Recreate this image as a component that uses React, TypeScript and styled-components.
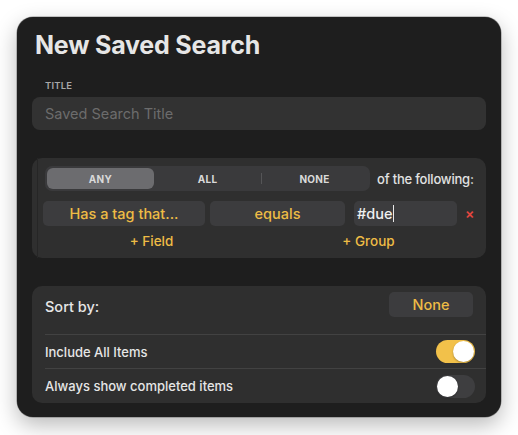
import React from "react";
import styled, { createGlobalStyle } from "styled-components";

const Global = createGlobalStyle`
  html, body { margin: 0; padding: 0; background: #ffffff; }
  body { font-family: Inter, "Noto Sans", "Liberation Sans", sans-serif; -webkit-font-smoothing: antialiased; }
  * { box-sizing: border-box; }
`;

const Page = styled.div`
  width: 518px;
  height: 435px;
  padding: 17px 0 0 17px;
`;

const Window = styled.div`
  width: 484px;
  height: 400px;
  background: #1e1e1e;
  border-radius: 16px;
  padding: 12px 15px 14px 15px;
  box-shadow: 0 8px 22px rgba(0, 0, 0, 0.28), 0 0 0 0.5px rgba(0, 0, 0, 0.4);
  display: flex;
  flex-direction: column;
`;

const Heading = styled.h1`
  margin: 0;
  padding-left: 3px;
  font-size: 25px;
  line-height: 32px;
  font-weight: 700;
  color: #e6e6e6;
  letter-spacing: -0.2px;
`;

const Label = styled.div`
  margin: 19px 0 0 13px;
  font-size: 9.5px;
  line-height: 12px;
  font-weight: 600;
  color: #a8a8a8;
  letter-spacing: 0.2px;
`;

const TextInput = styled.div`
  margin-top: 5px;
  height: 33px;
  border-radius: 8px;
  background: #323232;
  display: flex;
  align-items: center;
  padding-left: 13px;
  font-size: 14.5px;
  color: #6c6c6c;
`;

const Card = styled.div<{ $mt: number }>`
  margin-top: ${(p) => p.$mt}px;
  background: #2f2f2f;
  border-radius: 10px;
`;

const GroupCard = styled(Card)`
  height: 100px;
  padding-left: 5px;
  display: flex;
`;

const GroupInner = styled.div`
  flex: 1;
  border-left: 1.5px solid #262626;
  padding: 8px 6px 0 5px;
  display: flex;
  flex-direction: column;
`;

const SegRow = styled.div`
  display: flex;
  align-items: center;
  padding-left: 2px;
`;

const Segmented = styled.div`
  flex-shrink: 0;
  width: 325px;
  height: 25px;
  background: #3a3a3c;
  border-radius: 7px;
  padding: 2px;
  display: flex;
`;

const Segment = styled.div<{ $selected?: boolean; $divider?: boolean }>`
  flex: 1;
  display: flex;
  align-items: center;
  justify-content: center;
  border-radius: 6px;
  font-size: 10px;
  font-weight: 700;
  letter-spacing: 0.3px;
  color: #d9d9d9;
  background: ${(p) => (p.$selected ? "#6c6c6f" : "transparent")};
  position: relative;
  &::before {
    content: "";
    display: ${(p) => (p.$divider ? "block" : "none")};
    position: absolute;
    left: 0;
    top: 5px;
    bottom: 5px;
    width: 1px;
    background: #555557;
  }
`;

const Following = styled.div`
  margin-left: 7px;
  white-space: nowrap;
  font-size: 13px;
  font-weight: 500;
  letter-spacing: -0.2px;
  color: #e2e2e2;
`;

const RuleRow = styled.div`
  margin-top: 10px;
  display: flex;
  align-items: center;
  height: 25px;
`;

const Field = styled.div<{ $w: number; $ml: number }>`
  flex-shrink: 0;
  width: ${(p) => p.$w}px;
  margin-left: ${(p) => p.$ml}px;
  height: 25px;
  border-radius: 5px;
  background: #3c3c3e;
  display: flex;
  align-items: center;
  justify-content: center;
  font-size: 14.5px;
  font-weight: 500;
  color: #eebc45;
`;

const ValueInput = styled(Field)`
  justify-content: flex-start;
  padding-left: 3px;
  color: #f0f0f0;
`;

const Caret = styled.span`
  display: inline-block;
  width: 1px;
  height: 17px;
  background: #e8e8e8;
  margin-left: 1px;
`;

const Remove = styled.div`
  margin-left: 8px;
  font-size: 14px;
  font-weight: 600;
  color: #e2463f;
`;

const AddRow = styled.div`
  width: 434px;
  display: grid;
  grid-template-columns: 1fr 1fr;
  margin-top: 4px;
`;

const AddButton = styled.div`
  text-align: center;
  font-size: 13.5px;
  font-weight: 500;
  color: #eebc45;
  line-height: 22px;
`;

const SortCard = styled(Card)`
  height: 117px;
  padding-left: 13px;
  display: flex;
  flex-direction: column;
`;

const Row = styled.div<{ $h: number; $top?: boolean }>`
  height: ${(p) => p.$h}px;
  display: flex;
  align-items: center;
  padding-right: 11px;
  border-top: ${(p) => (p.$top ? "1px solid #424242" : "none")};
`;

const RowText = styled.div<{ $size: number }>`
  flex: 1;
  font-size: ${(p) => p.$size}px;
  font-weight: 500;
  color: #e6e6e6;
`;

const SortLabel = styled(RowText)`
  align-self: flex-start;
  padding-top: 12px;
`;

const PopButton = styled.div`
  width: 84px;
  height: 25px;
  margin-right: 2px;
  margin-top: -11px;
  border-radius: 5px;
  background: #3c3c3e;
  display: flex;
  align-items: center;
  justify-content: center;
  font-size: 14.5px;
  font-weight: 500;
  color: #eebc45;
`;

const Toggle = styled.div<{ $on: boolean }>`
  width: 39px;
  height: 23px;
  border-radius: 12px;
  background: ${(p) => (p.$on ? "#f2c14a" : "#3e3e40")};
  display: flex;
  align-items: center;
  justify-content: ${(p) => (p.$on ? "flex-end" : "flex-start")};
  padding: 0 1px;
`;

const Knob = styled.div`
  width: 21px;
  height: 21px;
  border-radius: 50%;
  background: #ffffff;
  box-shadow: 0 1px 2px rgba(0, 0, 0, 0.3);
`;

export default function App() {
  return (
    <>
      <Global />
      <Page>
        <Window>
          <Heading>New Saved Search</Heading>
          <Label>TITLE</Label>
          <TextInput>Saved Search Title</TextInput>

          <GroupCard $mt={28}>
            <GroupInner>
              <SegRow>
                <Segmented>
                  <Segment $selected>ANY</Segment>
                  <Segment>ALL</Segment>
                  <Segment $divider>NONE</Segment>
                </Segmented>
                <Following>of the following:</Following>
              </SegRow>
              <RuleRow>
                <Field $w={162} $ml={0}>Has a tag that...</Field>
                <Field $w={135} $ml={5}>equals</Field>
                <ValueInput $w={103} $ml={9}>
                  #due<Caret />
                </ValueInput>
                <Remove>×</Remove>
              </RuleRow>
              <AddRow>
                <AddButton>+ Field</AddButton>
                <AddButton>+ Group</AddButton>
              </AddRow>
            </GroupInner>
          </GroupCard>

          <SortCard $mt={28}>
            <Row $h={48}>
              <SortLabel $size={14.5}>Sort by:</SortLabel>
              <PopButton>None</PopButton>
            </Row>
            <Row $h={34} $top>
              <RowText $size={13}>Include All Items</RowText>
              <Toggle $on>
                <Knob />
              </Toggle>
            </Row>
            <Row $h={35} $top>
              <RowText $size={13}>Always show completed items</RowText>
              <Toggle $on={false}>
                <Knob />
              </Toggle>
            </Row>
          </SortCard>
        </Window>
      </Page>
    </>
  );
}
